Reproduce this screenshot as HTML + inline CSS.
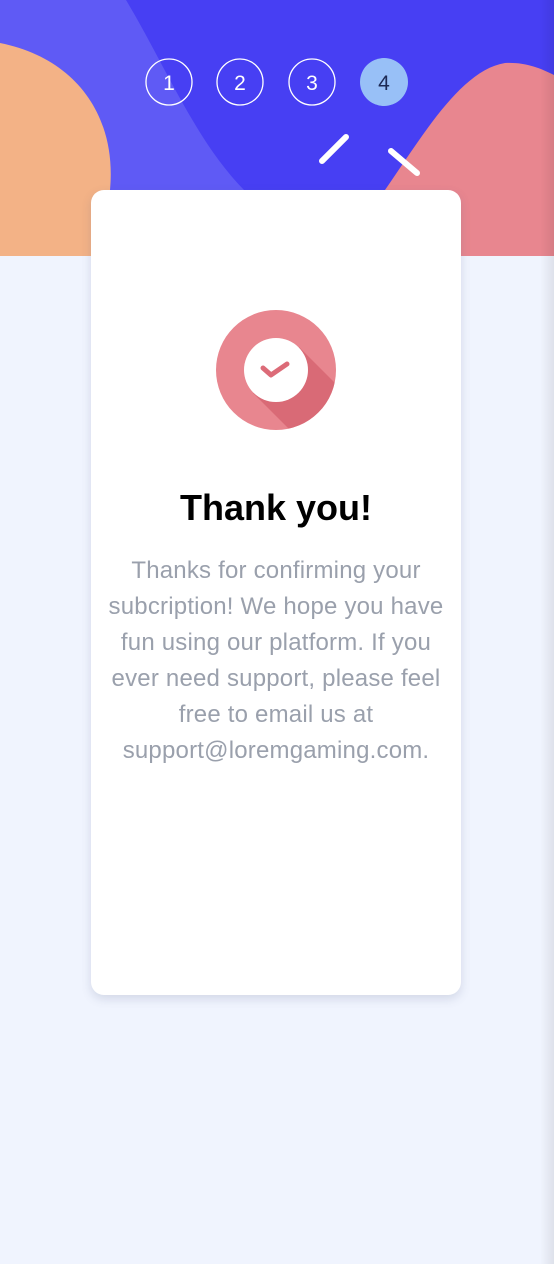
<!DOCTYPE html>
<html><head><meta charset="utf-8"><style>
html,body{margin:0;padding:0;width:554px;height:1264px;overflow:hidden;background:#f0f4fe;font-family:"Liberation Sans",sans-serif;}
.bg{position:absolute;left:0;top:0;}
.card{position:absolute;left:91px;top:190px;width:370px;height:805px;background:#fff;border-radius:13px;box-shadow:0 4px 10px rgba(80,90,130,0.18);}
h1{position:absolute;left:0;width:370px;top:297px;margin:0;text-align:center;font-size:36px;font-weight:bold;color:#000;}
p{position:absolute;left:10px;width:350px;top:363px;margin:0;text-align:center;font-size:24px;letter-spacing:0.2px;line-height:36px;color:#9aa0ac;}
.edge{position:absolute;right:0;top:0;width:14px;height:1264px;background:linear-gradient(to right,rgba(0,0,0,0),rgba(0,0,0,0.08));}
</style></head><body>
<svg class="bg" width="554" height="256" viewBox="0 0 554 256">
<rect width="554" height="256" fill="#473ff3"/>
<path d="M0 0 H126 C165 65 195 140 244 190 L244 256 H0 Z" fill="#5f5af5"/>
<path d="M0 43 C75 58 117 115 110 190 L110 256 H0 Z" fill="#f3b286"/>
<path d="M385 190 C420 140 460 70 505 63 C525 62 540 68 554 75 V256 H385 Z" fill="#e8868f"/>
<g fill="none" stroke="#fff" stroke-width="1.3">
<circle cx="169" cy="82" r="23"/><circle cx="240" cy="82" r="23"/><circle cx="312" cy="82" r="23"/>
</g>
<circle cx="384" cy="82" r="24" fill="#98c0f7"/>
<g font-family="Liberation Sans,sans-serif" font-size="21" text-anchor="middle">
<text x="169" y="90" fill="#fff">1</text><text x="240" y="90" fill="#fff">2</text><text x="312" y="90" fill="#fff">3</text><text x="384" y="90" fill="#1d2a55">4</text>
</g>
<g stroke="#fff" stroke-width="6" stroke-linecap="round">
<line x1="322" y1="161" x2="346" y2="137"/><line x1="391" y1="151" x2="417" y2="173"/>
</g>
</svg>
<div class="card">
<svg style="position:absolute;left:125px;top:120px" width="120" height="120" viewBox="0 0 120 120">
<defs><clipPath id="c"><circle cx="60" cy="60" r="60"/></clipPath></defs>
<circle cx="60" cy="60" r="60" fill="#e8868f"/>
<path d="M37 83 L83 37 L140 94 L94 140 Z" fill="#d96a76" clip-path="url(#c)"/>
<circle cx="60" cy="60" r="32" fill="#fff"/>
<path d="M47 58 L55 65 L71 54" fill="none" stroke="#dc6b78" stroke-width="5" stroke-linecap="round" stroke-linejoin="round"/>
</svg>
<h1>Thank you!</h1>
<p>Thanks for confirming your subcription! We hope you have fun using our platform. If you ever need support, please feel free to email us at support@loremgaming.com.</p>
</div>
<div class="edge"></div>
</body></html>
